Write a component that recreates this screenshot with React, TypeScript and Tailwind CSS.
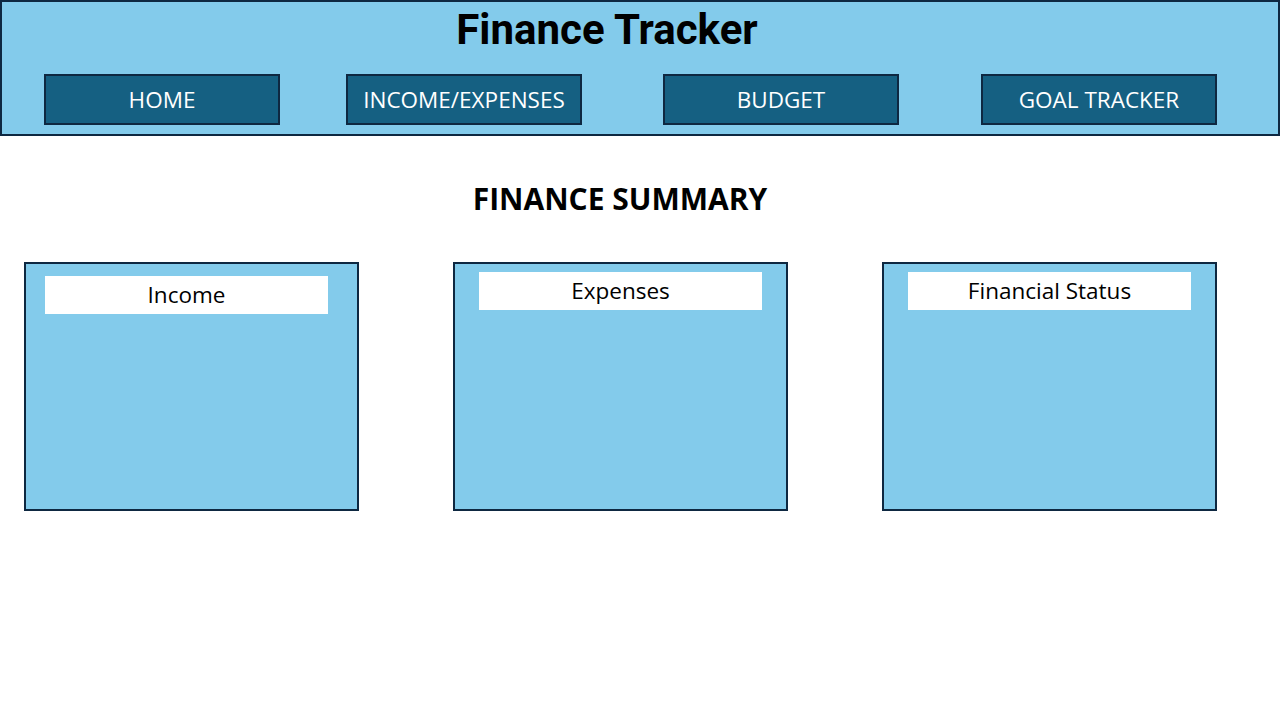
const navItems = [
  { label: "HOME", ml: "ml-[42px]" },
  { label: "INCOME/EXPENSES", ml: "ml-[66px]" },
  { label: "BUDGET", ml: "ml-[81px]" },
  { label: "GOAL TRACKER", ml: "ml-[82px]" },
];

const cards = [
  { title: "Income", pos: "ml-[19px] mt-[12px]", ml: "ml-[24px]" },
  { title: "Expenses", pos: "ml-[24px] mt-[8px]", ml: "ml-[94px]" },
  { title: "Financial Status", pos: "ml-[24px] mt-[8px]", ml: "ml-[94px]" },
];

export default function App() {
  return (
    <div className="w-[1280px] h-[720px] bg-white font-['Open_Sans',sans-serif] overflow-hidden">
      {/* Header */}
      <header className="h-[136px] bg-[#83cbeb] border-2 border-[#0e2841]">
        <div className="flex justify-center pr-[66px] pt-[3px]">
          <h1 className="font-['Roboto',sans-serif] font-bold text-[42px] leading-[50px] text-black">
            Finance Tracker
          </h1>
        </div>
        <nav className="flex mt-[19px]">
          {navItems.map((item) => (
            <button
              key={item.label}
              className={`${item.ml} w-[236px] h-[51px] bg-[#156082] border-2 border-[#0e2841] text-white text-[22.5px] font-['Open_Sans',sans-serif] flex items-center justify-center`}
            >
              {item.label}
            </button>
          ))}
        </nav>
      </header>

      {/* Summary */}
      <main>
        <h2 className="text-center font-['Open_Sans',sans-serif] font-bold text-[30px] leading-[36px] mt-[45px] pr-[40px]">
          FINANCE SUMMARY
        </h2>
        <div className="flex mt-[45px]">
          {cards.map((card) => (
            <div
              key={card.title}
              className={`${card.ml} w-[335px] h-[249px] bg-[#83cbeb] border-2 border-[#0e2841] flex flex-col`}
            >
              <div
                className={`${card.pos} w-[283px] h-[38px] bg-white flex items-center justify-center text-[22.5px] text-black font-['Open_Sans',sans-serif]`}
              >
                {card.title}
              </div>
            </div>
          ))}
        </div>
      </main>
    </div>
  );
}
